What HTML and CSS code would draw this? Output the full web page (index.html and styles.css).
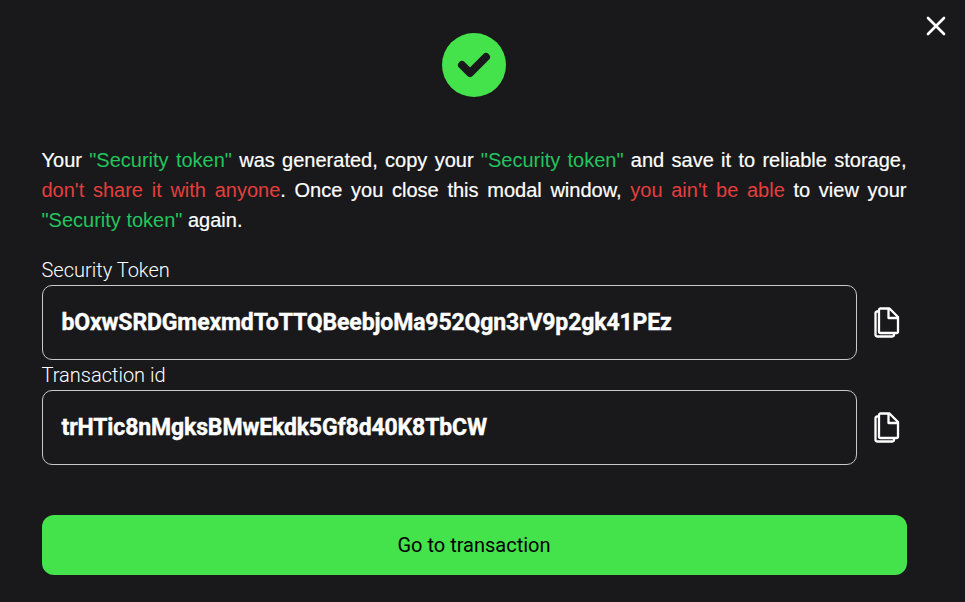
FILE: index.html
```html
<!DOCTYPE html>
<html lang="en">
<head>
    <meta charset="UTF-8">
    <title>Security token</title>
    <meta name="viewport" content="width=device-width, initial-scale=1.0">
    <link rel="stylesheet" href="styles.css">
</head>
<body>

<div class="modal">
    <button class="close-btn" aria-label="Close">
        <svg width="20" height="20" viewBox="0 0 20 20"><path d="M2 2l16 16M18 2L2 18"/></svg>
    </button>

    <div class="status">
        <svg width="34" height="26" viewBox="0 0 34 26"><path d="M5 13l8 8L29 5"/></svg>
    </div>

    <p class="message">Your <span class="green">"Security token"</span> was generated, copy your <span class="green">"Security token"</span> and save it to reliable storage, <span class="red">don't share it with anyone</span>. Once you close this modal window, <span class="red">you ain't be able</span> to view your <span class="green">"Security token"</span> again.</p>

    <div class="label">Security Token</div>
    <div class="row">
        <div class="field">bOxwSRDGmexmdToTTQBeebjoMa952Qgn3rV9p2gk41PEz</div>
        <button class="copy-btn" aria-label="Copy">
            <svg width="26" height="32" viewBox="0 0 26 32"><path d="M6 1.500h9.500l8.500 8.500v14.500a1.500 1.500 0 0 1-1.500 1.500H6.500A1.500 1.500 0 0 1 5 24.500V3a1.500 1.500 0 0 1 1-1.500zM14.500 1.500V11H24M4 4.500H3A1.500 1.500 0 0 0 1.500 6v22A1.500 1.500 0 0 0 3 29.500h15.500a1.500 1.500 0 0 0 1.500-1.500v-1"/></svg>
        </button>
    </div>

    <div class="label">Transaction id</div>
    <div class="row">
        <div class="field">trHTic8nMgksBMwEkdk5Gf8d40K8TbCW</div>
        <button class="copy-btn" aria-label="Copy">
            <svg width="26" height="32" viewBox="0 0 26 32"><path d="M6 1.500h9.500l8.500 8.500v14.500a1.500 1.500 0 0 1-1.500 1.500H6.500A1.500 1.500 0 0 1 5 24.500V3a1.500 1.500 0 0 1 1-1.500zM14.500 1.500V11H24M4 4.500H3A1.500 1.500 0 0 0 1.500 6v22A1.500 1.500 0 0 0 3 29.500h15.500a1.500 1.500 0 0 0 1.500-1.500v-1"/></svg>
        </button>
    </div>

    <button class="submit">Go to transaction</button>
</div>

</body>
</html>
```
FILE: styles.css
```css
* {
    box-sizing: border-box;
}
body {
    margin: 0;
    font-family: Roboto, sans-serif;
    background: #19191b;
    color: white;
}
button {
    padding: 0;
    border: none;
    background: none;
    font-family: inherit;
    cursor: pointer;
}
svg {
    display: block;
    fill: none;
    stroke: white;
}
.modal {
    position: relative;
    height: 602px;
    padding: 33px 58.500px 0 41.500px;
}
.close-btn {
    position: absolute;
    top: 16px;
    right: 19px;
}
.close-btn svg {
    stroke-width: 2.6;
    stroke-linecap: round;
}
.status {
    display: flex;
    align-items: center;
    justify-content: center;
    width: 64px;
    height: 64px;
    margin: 0 auto 48px;
    border-radius: 50%;
    background: #44e24b;
}
.status svg {
    stroke: #19191b;
    stroke-width: 8;
    stroke-linecap: round;
    stroke-linejoin: round;
}
.message {
    margin: 0 0 20px;
    font-family: "Liberation Sans", Arial, sans-serif;
    font-size: 20px;
    line-height: 30px;
    text-align: justify;
    -webkit-text-stroke: 0.2px;
}
.green {
    color: #22c55e;
    -webkit-text-stroke: 0;
}
.red {
    color: #e53e3e;
    -webkit-text-stroke: 0;
}
.label {
    height: 30px;
    font-size: 20px;
    font-weight: 300;
    line-height: 30px;
}
.row {
    display: flex;
    align-items: center;
    gap: 17px;
}
.field {
    width: 815px;
    height: 75px;
    padding-left: 19px;
    border: 1px solid #c8c8c8;
    border-radius: 10px;
    font-size: 23px;
    font-weight: 700;
    letter-spacing: -0.13px;
    line-height: 73px;
    -webkit-text-stroke: 0.4px;
}
.copy-btn svg {
    stroke-width: 2.3;
    stroke-linejoin: round;
}
.submit {
    width: 865px;
    height: 60px;
    margin-top: 50px;
    border-radius: 12px;
    background: #44e24b;
    color: #000;
    font-size: 20px;
}
```
